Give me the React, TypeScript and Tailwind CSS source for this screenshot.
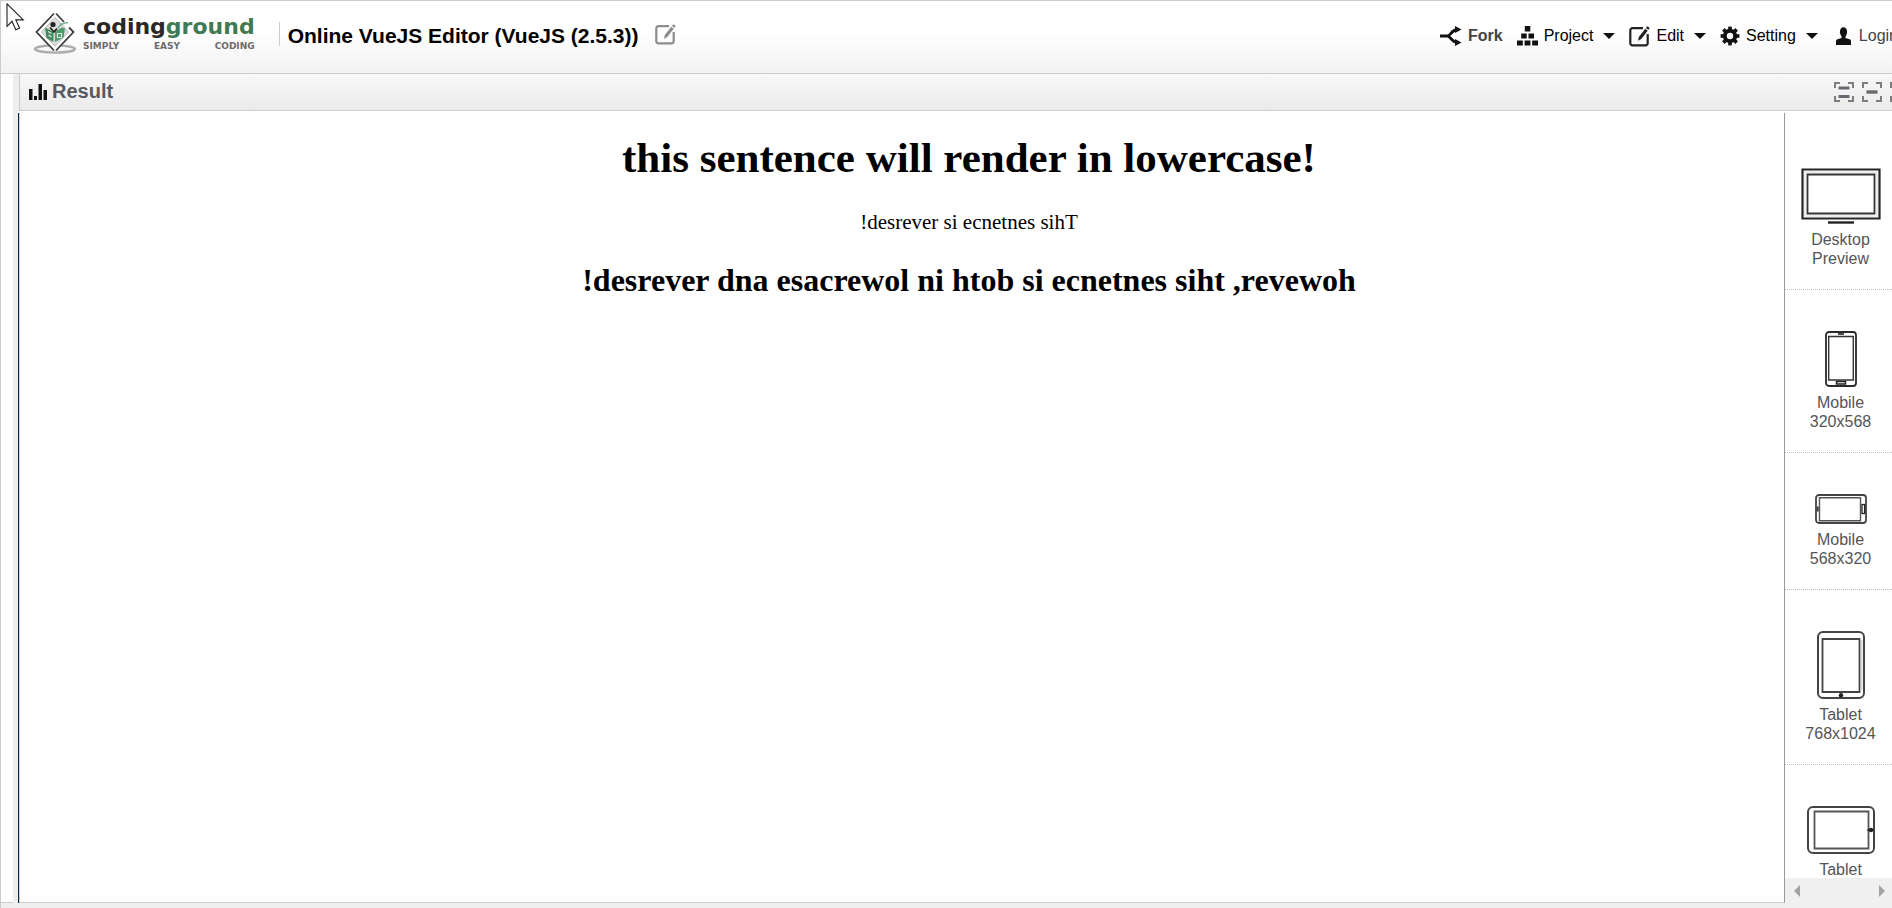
import React from "react";

function LogoMark() {
  return (
    <svg width="44" height="42" viewBox="0 0 44 42" fill="none" aria-hidden="true">
      <ellipse cx="22" cy="37" rx="20" ry="3.6" stroke="#a9adab" strokeWidth="2.4" />
      <path d="M22 1.5 40 20 22 39 4 20Z" fill="#fff" />
      <path d="M22 5.5 35.5 20 22 34 8.5 20Z" fill="#dcdfdd" stroke="#b5b8b6" strokeWidth="1" />
      <path d="M21 1.500 3.500 20 21 38.500M23 1.500 31 10M36 15.500 40.500 20 23 38.500" stroke="#3d3f3e" strokeWidth="1.8" />
      <circle cx="20" cy="12.500" r="2.600" fill="#222" />
      <path d="M12 15.500 20.500 20v10L13.500 26Z" fill="#3f8a5c" />
      <path d="M22 19.500 29 15.500l3 1-1.500 9L22 30Z" fill="#4d9a6a" />
      <path d="M15 19.500 18.500 21.500M15.500 23 18.500 25M24.500 21.500h4v4h-4z" stroke="#d9eadf" strokeWidth="1.200" />
      <path d="M17 15.500 21 20 24 16.500" stroke="#222" strokeWidth="1.800" />
      <path d="M25 16c2-4 5-5 10-5.500M27 12.500l4-1" stroke="#6fae86" strokeWidth="1.600" />
    </svg>
  );
}

function EditIcon({ color }: { color: string }) {
  return (
    <svg width="21" height="22" viewBox="0 0 21 22" fill="none" aria-hidden="true">
      <path d="M14 3.200H3.500A2.200 2.200 0 0 0 1.300 5.400v12.800a2.200 2.200 0 0 0 2.200 2.200h13a2.200 2.200 0 0 0 2.200-2.200V9" stroke={color} strokeWidth="2.200" />
      <path d="M9 15.800 9.800 12 16.200 3.800l2.500 1.900-6.400 8.300Z" fill={color} />
      <path d="m16.900 2.900 1.400-1.700 2.500 1.900-1.400 1.700Z" fill={color} />
    </svg>
  );
}

function ForkIcon() {
  return (
    <svg width="22" height="20" viewBox="0 0 22 20" fill="none" aria-hidden="true">
      <path d="M0 10h7.500c3 0 4-6.500 10-6.500M7.500 10c3 0 4 6.500 10 6.500" stroke="#111" strokeWidth="2.800" />
      <path d="m15 0 6.500 3.500-6.500 3.500zM15 13l6.500 3.500-6.500 3.500z" fill="#111" />
    </svg>
  );
}

function ProjectIcon() {
  return (
    <svg width="21" height="20" viewBox="0 0 21 20" fill="#111" aria-hidden="true">
      <path d="M7.800 0h5.500v5.500H7.800zM4.200 7.500h5.500v5H4.200zM11.500 7.500H17v5h-5.500zM0 14.500h5.800v5H0zM7.600 14.500h5.800v5H7.600zM15.200 14.500H21v5h-5.800z" />
    </svg>
  );
}

function GearIcon() {
  const teeth = [0, 45, 90, 135, 180, 225, 270, 315];
  return (
    <svg width="20" height="20" viewBox="0 0 20 20" aria-hidden="true">
      <circle cx="10" cy="10" r="5.200" fill="none" stroke="#111" strokeWidth="4" />
      {teeth.map((a) => (
        <path key={a} d="M8.200.600h3.600v4H8.200z" fill="#111" transform={`rotate(${a} 10 10)`} />
      ))}
    </svg>
  );
}

function UserIcon() {
  return (
    <svg width="15" height="18" viewBox="0 0 15 18" fill="#111" aria-hidden="true">
      <ellipse cx="7.500" cy="5" rx="3.600" ry="4.800" />
      <path d="M5.500 8h4v3l4 1.200c1 .4 1.500 1 1.500 2V18H0v-3.800c0-1 .5-1.600 1.500-2l4-1.200z" />
    </svg>
  );
}

function Caret() {
  return (
    <svg width="12" height="6" viewBox="0 0 12 6" fill="#111" aria-hidden="true">
      <path d="M0 0h12L6 6z" />
    </svg>
  );
}

function ResultIcon() {
  return (
    <svg width="20" height="16" viewBox="0 0 20 16" fill="#111" aria-hidden="true">
      <path d="M1 5h3.500v11H1zM6 12h3v4H6zM10.500 0h3.500v16h-3.500zM15.500 6H19v10h-3.500z" />
    </svg>
  );
}

function FrameIcon({ kind }: { kind: "split" | "single" }) {
  return (
    <svg width="20" height="20" viewBox="0 0 20 20" fill="none" stroke="#7d7d7d" aria-hidden="true">
      <path d="M6 1H1v5M14 1h5v5M6 19H1v-5M14 19h5v-5" strokeWidth="2" />
      {kind === "split" ? (
        <path d="M4.500 6h11M4.500 14.500h11" stroke="#666a6e" strokeWidth="3" />
      ) : (
        <path d="M4.500 10h11" stroke="#666a6e" strokeWidth="3.400" />
      )}
    </svg>
  );
}

function DesktopArt() {
  return (
    <svg width="80" height="56" viewBox="0 0 80 56" fill="none" aria-hidden="true">
      <path d="M1.500 1.500h77v49h-77z" stroke="#262626" strokeWidth="2.200" />
      <path d="M6.500 6.500h67v39h-67z" stroke="#333" strokeWidth="1.800" />
      <path d="M4 4h72v44H4z" stroke="#ddd" strokeWidth="1" />
      <path d="M27 54.500h26" stroke="#222" strokeWidth="2.400" />
    </svg>
  );
}

function PhonePortraitArt() {
  return (
    <svg width="32" height="56" viewBox="0 0 32 56" fill="none" aria-hidden="true">
      <rect x="1" y="1" width="30" height="54" rx="3" stroke="#2a2a2a" strokeWidth="1.800" />
      <path d="M3.700 5.500h24.600v43.500H3.700z" stroke="#333" strokeWidth="1.400" />
      <path d="M13 3h6" stroke="#222" strokeWidth="1.600" />
      <rect x="11.500" y="50.500" width="9" height="2.500" stroke="#222" strokeWidth="1.500" />
    </svg>
  );
}

function PhoneLandscapeArt() {
  return (
    <svg width="52" height="30" viewBox="0 0 52 30" fill="none" aria-hidden="true">
      <rect x="1" y="1" width="50" height="28" rx="3" stroke="#444" strokeWidth="1.800" />
      <path d="M4.500 3.700h41v23.100h-41z" stroke="#555" strokeWidth="1.400" />
      <path d="M2.800 12.500v5" stroke="#333" strokeWidth="1.600" />
      <rect x="47" y="10.500" width="2.600" height="9" stroke="#222" strokeWidth="1.300" />
    </svg>
  );
}

function TabletPortraitArt() {
  return (
    <svg width="48" height="68" viewBox="0 0 48 68" fill="none" aria-hidden="true">
      <rect x="1" y="1" width="46" height="66" rx="5" stroke="#444" strokeWidth="2" />
      <path d="M5.500 8h37v53h-37z" stroke="#444" strokeWidth="1.800" />
      <path d="M44.500 9v50" stroke="#d4d4d4" strokeWidth="1.500" />
      <circle cx="24" cy="64.200" r="2.200" fill="#222" />
    </svg>
  );
}

function TabletLandscapeArt() {
  return (
    <svg width="68" height="48" viewBox="0 0 68 48" fill="none" aria-hidden="true">
      <rect x="1" y="1" width="66" height="46" rx="5" stroke="#444" strokeWidth="2" />
      <path d="M7.500 5.500h54v37h-54z" stroke="#555" strokeWidth="1.800" />
      <path d="M60.500 24h6" stroke="#222" strokeWidth="2" />
      <circle cx="64" cy="24" r="2.200" fill="#222" />
    </svg>
  );
}

const devices = [
  { id: "desktop", art: <DesktopArt />, name: "Desktop", size: "Preview" },
  { id: "phone-tall", art: <PhonePortraitArt />, name: "Mobile", size: "320x568" },
  { id: "phone-wide", art: <PhoneLandscapeArt />, name: "Mobile", size: "568x320" },
  { id: "tablet-tall", art: <TabletPortraitArt />, name: "Tablet", size: "768x1024" },
  { id: "tablet-wide", art: <TabletLandscapeArt />, name: "Tablet", size: "" },
];

function MenuButton({ icon, label }: { icon: React.ReactNode; label: string }) {
  return (
    <button type="button" className="flex items-center gap-1.5 text-black">
      {icon}
      {label}
      <span className="ml-1">
        <Caret />
      </span>
    </button>
  );
}

function Header() {
  return (
    <header className="flex h-[74px] shrink-0 items-start overflow-hidden border-y border-[#ccc] bg-linear-to-b from-white from-40% to-[#f2f2f2] pl-8">
      <a href="#" className="mt-[11px] flex shrink-0 items-start gap-1.5">
        <LogoMark />
        <span className="flex flex-col font-['DejaVu_Sans',sans-serif] font-bold">
          <span className="text-[22px] leading-[30px] text-[#2b2627]">
            coding<span className="text-[#417a52]">ground</span>
          </span>
          <span className="flex justify-between text-[9px] leading-2 text-[#6b6b6b]">
            <span>SIMPLY</span>
            <span>EASY</span>
            <span>CODING</span>
          </span>
        </span>
      </a>
      <div className="mt-[21px] ml-6 h-6 w-px shrink-0 bg-[#ccc]" />
      <h1 className="mt-[21px] ml-2 shrink-0 text-[21px] leading-7 font-bold text-black">Online VueJS Editor (VueJS (2.5.3))</h1>
      <button type="button" aria-label="Rename" className="mt-[22px] ml-4 shrink-0">
        <EditIcon color="#8c8c8c" />
      </button>
      <nav className="mt-[23px] -mr-1.5 ml-auto flex shrink-0 items-center gap-3.5 text-base leading-6">
        <a href="#" className="flex items-center gap-1.5 font-bold text-[#444]">
          <ForkIcon />
          Fork
        </a>
        <MenuButton icon={<ProjectIcon />} label="Project" />
        <MenuButton icon={<EditIcon color="#222" />} label="Edit" />
        <MenuButton icon={<GearIcon />} label="Setting" />
        <a href="#" className="ml-1 flex items-center gap-2 text-[#444]">
          <UserIcon />
          Login
        </a>
      </nav>
    </header>
  );
}

function ResultBar() {
  return (
    <div className="ml-px flex h-[37px] shrink-0 items-center overflow-hidden border-b border-l border-[#ccc] bg-linear-to-b from-[#f8f8f8] to-[#ebebeb] pl-2">
      <ResultIcon />
      <h2 className="ml-1 pb-0.5 text-xl font-bold text-[#595962]">Result</h2>
      <div className="-mr-[18px] ml-auto flex gap-2">
        <button type="button" aria-label="Split view">
          <FrameIcon kind="split" />
        </button>
        <button type="button" aria-label="Single view">
          <FrameIcon kind="single" />
        </button>
        <button type="button" aria-label="Full view">
          <FrameIcon kind="single" />
        </button>
      </div>
    </div>
  );
}

function Preview() {
  return (
    <section className="flex-1 overflow-hidden border-r border-b border-l border-[#ccc] border-r-[#999] font-['Liberation_Serif',serif] text-black">
      <div className="w-[calc(100%+134px)] text-center">
        <h1 className="pt-[21px] text-[43px] leading-[48px] font-bold">this sentence will render in lowercase!</h1>
        <p className="mt-7 text-[21px] leading-6">!desrever si ecnetnes sihT</p>
        <h2 className="mt-7 text-[32px] leading-9 font-bold">!desrever dna esacrewol ni htob si ecnetnes siht ,revewoh</h2>
      </div>
    </section>
  );
}

function DevicePanel() {
  return (
    <aside className="flex w-[107px] shrink-0 flex-col bg-white">
      <div className="min-h-0 flex-1 overflow-hidden pt-3.5">
        {devices.map((d) => (
          <button
            key={d.id}
            type="button"
            className="flex w-[111px] flex-col items-center gap-1.5 border-b border-dotted border-[#bbb] pt-[41px] pb-[21px] text-base leading-[19px] text-[#555]"
          >
            {d.art}
            <span>
              {d.name}
              <br />
              {d.size}
            </span>
          </button>
        ))}
      </div>
      <div className="flex h-[30px] shrink-0 items-start justify-between bg-[#f0f0f0] pt-[7px] pr-1.5 pl-2">
        <button type="button" aria-label="Scroll left">
          <svg width="7" height="12" viewBox="0 0 7 12" fill="#a3a3a3">
            <path d="M7 0v12L1 6z" />
          </svg>
        </button>
        <button type="button" aria-label="Scroll right">
          <svg width="7" height="12" viewBox="0 0 7 12" fill="#a3a3a3">
            <path d="M0 0v12l6-6z" />
          </svg>
        </button>
      </div>
    </aside>
  );
}

export default function App() {
  return (
    <div className="relative flex h-screen flex-col overflow-hidden border-l border-[#ccc] bg-[#eee] font-['Liberation_Sans',sans-serif]">
      <Header />
      <div className="flex min-h-0 flex-1">
        <div className="mb-[5px] w-3 shrink-0 border-b border-[#ccc] bg-white" />
        <main className="ml-[5px] flex min-w-0 flex-1 flex-col">
          <ResultBar />
          <div className="ml-px h-0.5 shrink-0 bg-white" />
          <div className="flex min-h-0 flex-1">
            <div className="mb-[5px] flex min-w-0 flex-1 border-l border-[#0b2747] bg-white">
              <Preview />
            </div>
            <DevicePanel />
          </div>
        </main>
      </div>
      <svg className="absolute top-[3px] left-[5px]" width="20" height="28" viewBox="0 0 20 28" aria-hidden="true">
        <path d="M1 .800v22.500l5-5 3.800 8.500 3.800-1.700-3.800-8.200h7.500z" fill="#fff" stroke="#222" strokeWidth="1.100" />
      </svg>
    </div>
  );
}
